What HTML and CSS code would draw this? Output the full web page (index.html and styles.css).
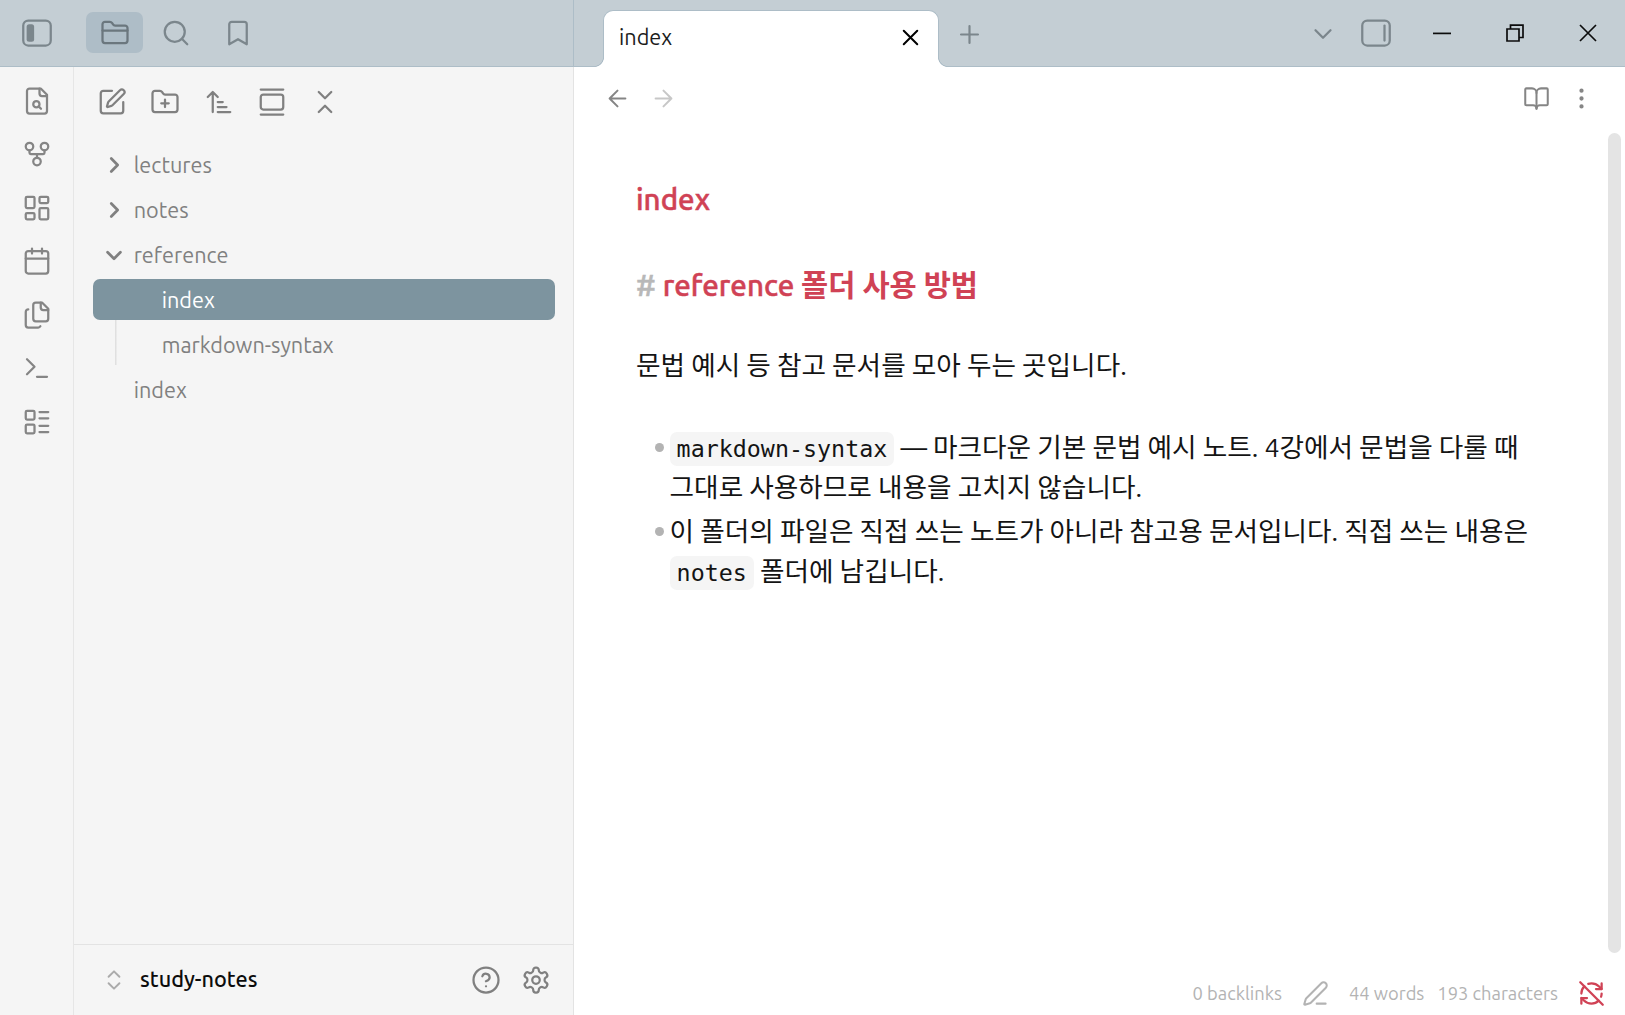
FILE: index.html
```html
<!DOCTYPE html>
<html lang="ko">
<head>
<meta charset="utf-8">
<title>index - study-notes</title>
<link rel="stylesheet" href="styles.css">
</head>
<body>
<header class="titlebar">
  <div class="titlebar-left">
    <div class="btn toggle-left"><svg class="icon" viewBox="0 0 24 24"><rect x="1" y="2" width="22" height="20" rx="4"/><rect class="solid" x="3.700" y="5" width="6" height="14" rx="2"/></svg></div>
    <div class="side-tab active"><svg class="icon" viewBox="0 0 24 24"><path d="M20 20a2 2 0 0 0 2-2V8a2 2 0 0 0-2-2h-7.900a2 2 0 0 1-1.690-.9L9.600 3.900A2 2 0 0 0 7.930 3H4a2 2 0 0 0-2 2v13a2 2 0 0 0 2 2Z"/><path d="M2 10h20"/></svg></div>
    <div class="side-tab"><svg class="icon" viewBox="0 0 24 24"><circle cx="11" cy="11" r="8"/><path d="m21 21-4.340-4.340"/></svg></div>
    <div class="side-tab"><svg class="icon" viewBox="0 0 24 24"><path d="m19 21-7-4-7 4V5a2 2 0 0 1 2-2h10a2 2 0 0 1 2 2z"/></svg></div>
  </div>
  <div class="titlebar-main">
    <div class="tab"><span class="tab-title">index</span><svg class="icon close" viewBox="0 0 24 24"><path d="M18 6 6 18M6 6l12 12"/></svg></div>
    <div class="btn new-tab"><svg class="icon" viewBox="0 0 24 24"><path d="M5 12h14M12 5v14"/></svg></div>
    <div class="btn tab-list"><svg class="icon" viewBox="0 0 24 24"><path d="m6 9 6 6 6-6"/></svg></div>
    <div class="btn toggle-right"><svg class="icon" viewBox="0 0 24 24"><rect x="1" y="2" width="22" height="20" rx="4"/><path d="M18.800 6v12"/></svg></div>
    <div class="window-controls">
      <svg viewBox="0 0 18 18"><path d="M0 9.400h18"/></svg>
      <svg viewBox="0 0 18 18"><path d="M1 5h12v12H1zM4.500 5V1.200H17v12.300h-4"/></svg>
      <svg viewBox="0 0 18 18"><path d="m1 1 16 16M17 1 1 17"/></svg>
    </div>
  </div>
</header>
<div class="workspace">
  <nav class="ribbon">
    <svg class="icon" viewBox="0 0 24 24"><path d="M14 2v4a2 2 0 0 0 2 2h4"/><path d="M15 2H6a2 2 0 0 0-2 2v16a2 2 0 0 0 2 2h12a2 2 0 0 0 2-2V7z"/><circle cx="11.500" cy="14.500" r="2.500"/><path d="m13.300 16.300 1.900 1.900"/></svg>
    <svg class="icon" viewBox="0 0 24 24"><circle cx="12" cy="18" r="3"/><circle cx="6" cy="6" r="3"/><circle cx="18" cy="6" r="3"/><path d="M18 9v2c0 .6-.4 1-1 1H7c-.6 0-1-.4-1-1V9M12 12v3"/></svg>
    <svg class="icon" viewBox="0 0 24 24"><rect x="3" y="3" width="7" height="9" rx="1"/><rect x="14" y="3" width="7" height="5" rx="1"/><rect x="14" y="12" width="7" height="9" rx="1"/><rect x="3" y="16" width="7" height="5" rx="1"/></svg>
    <svg class="icon" viewBox="0 0 24 24"><rect x="3" y="4" width="18" height="18" rx="2"/><path d="M8 2v4M16 2v4M3 10h18"/></svg>
    <svg class="icon" viewBox="0 0 24 24"><path d="M15 2v4a2 2 0 0 0 2 2h4"/><path d="M16 2h-5a2 2 0 0 0-2 2v11a2 2 0 0 0 2 2h8a2 2 0 0 0 2-2V7z"/><path d="M5 7.500c-1.100 0-2 .9-2 2V20a2 2 0 0 0 2 2h8a2 2 0 0 0 1.700-1"/></svg>
    <svg class="icon" viewBox="0 0 24 24"><path d="m4 17 6-6-6-6M12 19h8"/></svg>
    <svg class="icon" viewBox="0 0 24 24"><rect x="3" y="3" width="7" height="7" rx="1"/><rect x="3" y="14" width="7" height="7" rx="1"/><path d="M14 4h7M14 9h7M14 15h7M14 20h7"/></svg>
  </nav>
  <aside class="sidebar">
    <div class="nav-buttons">
      <svg class="icon" viewBox="0 0 24 24"><path d="M12 3H5a2 2 0 0 0-2 2v14a2 2 0 0 0 2 2h14a2 2 0 0 0 2-2v-7"/><path d="M18.375 2.625a1 1 0 0 1 3 3l-9.013 9.014a2 2 0 0 1-.853.505l-2.873.84a.5.5 0 0 1-.62-.62l.84-2.873a2 2 0 0 1 .506-.852z"/></svg>
      <svg class="icon" viewBox="0 0 24 24"><path d="M12 10v6M9 13h6"/><path d="M20 20a2 2 0 0 0 2-2V8a2 2 0 0 0-2-2h-7.900a2 2 0 0 1-1.690-.9L9.600 3.900A2 2 0 0 0 7.930 3H4a2 2 0 0 0-2 2v13a2 2 0 0 0 2 2Z"/></svg>
      <svg class="icon" viewBox="0 0 24 24"><path d="m3 8 4-4 4 4M7 4v16M11 12h4M11 16h7M11 20h10"/></svg>
      <svg class="icon" viewBox="0 0 24 24"><rect x="3" y="6" width="18" height="12" rx="2"/><path d="M3 2h18M3 22h18"/></svg>
      <svg class="icon" viewBox="0 0 24 24"><path d="m7 20 5-5 5 5M7 4l5 5 5-5"/></svg>
    </div>
    <div class="tree">
      <div class="row"><svg class="icon caret" viewBox="0 0 24 24"><path d="m9 5 7 7-7 7"/></svg><span>lectures</span></div>
      <div class="row"><svg class="icon caret" viewBox="0 0 24 24"><path d="m9 5 7 7-7 7"/></svg><span>notes</span></div>
      <div class="row"><svg class="icon caret" viewBox="0 0 24 24"><path d="m5 9 7 7 7-7"/></svg><span>reference</span></div>
      <div class="children">
        <div class="row child selected"><span>index</span></div>
        <div class="row child"><span>markdown-syntax</span></div>
      </div>
      <div class="row leaf"><span>index</span></div>
    </div>
    <div class="vault">
      <svg class="icon updown" viewBox="0 0 24 24"><path d="m7 15 5 5 5-5M7 9l5-5 5 5"/></svg>
      <span class="vault-name">study-notes</span>
      <svg class="icon" viewBox="0 0 24 24"><circle cx="12" cy="12" r="10"/><path d="M9.090 9a3 3 0 0 1 5.830 1c0 2-3 3-3 3M12 17h.01"/></svg>
      <svg class="icon" viewBox="0 0 24 24"><path d="M12.220 2h-.44a2 2 0 0 0-2 2v.18a2 2 0 0 1-1 1.730l-.43.25a2 2 0 0 1-2 0l-.15-.08a2 2 0 0 0-2.730.73l-.22.38a2 2 0 0 0 .73 2.730l.15.1a2 2 0 0 1 1 1.720v.51a2 2 0 0 1-1 1.740l-.15.09a2 2 0 0 0-.73 2.730l.22.38a2 2 0 0 0 2.730.73l.15-.08a2 2 0 0 1 2 0l.43.25a2 2 0 0 1 1 1.730V20a2 2 0 0 0 2 2h.44a2 2 0 0 0 2-2v-.18a2 2 0 0 1 1-1.730l.43-.25a2 2 0 0 1 2 0l.15.08a2 2 0 0 0 2.730-.73l.22-.39a2 2 0 0 0-.73-2.730l-.15-.08a2 2 0 0 1-1-1.740v-.5a2 2 0 0 1 1-1.740l.15-.09a2 2 0 0 0 .73-2.730l-.22-.38a2 2 0 0 0-2.730-.73l-.15.08a2 2 0 0 1-2 0l-.43-.25a2 2 0 0 1-1-1.730V4a2 2 0 0 0-2-2z"/><circle cx="12" cy="12" r="3"/></svg>
    </div>
  </aside>
  <main class="leaf-view">
    <div class="view-header">
      <svg class="icon" viewBox="0 0 24 24"><path d="m12 19-7-7 7-7M19 12H5"/></svg>
      <svg class="icon disabled" viewBox="0 0 24 24"><path d="M5 12h14M12 5l7 7-7 7"/></svg>
      <svg class="icon book" viewBox="0 0 24 24"><path d="M12 7v14"/><path d="M3 18a1 1 0 0 1-1-1V4a1 1 0 0 1 1-1h5a4 4 0 0 1 4 4 4 4 0 0 1 4-4h5a1 1 0 0 1 1 1v13a1 1 0 0 1-1 1h-6a3 3 0 0 0-3 3 3 3 0 0 0-3-3z"/></svg>
      <svg class="icon" viewBox="0 0 24 24"><circle cx="12" cy="12" r="1"/><circle cx="12" cy="5" r="1"/><circle cx="12" cy="19" r="1"/></svg>
    </div>
    <div class="scroller">
      <article class="note">
        <h1 class="inline-title">index</h1>
        <h2 class="heading"><span class="mark">#</span> reference <span class="hangul">폴더 사용 방법</span></h2>
        <p class="para">문법 예시 등 참고 문서를 모아 두는 곳입니다.</p>
        <ul class="list">
          <li><code>markdown-syntax</code> <span class="dash">—</span> 마크다운 기본 문법 예시 노트. 4강에서 문법을 다룰 때<br>그대로 사용하므로 내용을 고치지 않습니다.</li>
          <li>이 폴더의 파일은 직접 쓰는 노트가 아니라 참고용 문서입니다. 직접 쓰는 내용은<br><code>notes</code> 폴더에 남깁니다.</li>
        </ul>
      </article>
      <div class="scrollbar"></div>
    </div>
    <footer class="status">
      <span class="backlinks">0 backlinks</span>
      <svg class="icon pen" viewBox="0 0 24 24"><path d="M13 21h8"/><path d="M21.174 6.812a1 1 0 0 0-3.986-3.987L3.842 16.174a2 2 0 0 0-.5.830l-1.321 4.352a.5.5 0 0 0 .623.622l4.353-1.320a2 2 0 0 0 .830-.497z"/></svg>
      <span class="words">44 words</span>
      <span class="chars">193 characters</span>
      <svg class="icon sync" viewBox="0 0 24 24"><path d="M21 8 18.740 5.740A9.750 9.750 0 0 0 12 3C11 3 10.030 3.160 9.130 3.470"/><path d="M8 16H3v5"/><path d="M3 12C3 9.510 4 7.260 5.640 5.640"/><path d="m3 16 2.260 2.260A9.750 9.750 0 0 0 12 21c2.490 0 4.740-1 6.360-2.640"/><path d="M21 12c0 1-.16 1.970-.47 2.870"/><path d="M21 3v5h-5"/><path d="M22 22 2 2"/></svg>
    </footer>
  </main>
</div>
</body>
</html>
```
FILE: styles.css
```css
* { box-sizing: border-box; }
body {
  margin: 0;
  width: 1625px;
  height: 1015px;
  overflow: hidden;
  display: flex;
  flex-direction: column;
  background: #fff;
  color: #121212;
  font: 21.667px/28px "Ubuntu", "Noto Sans", "Noto Sans CJK KR", sans-serif;
}
.icon {
  display: block;
  flex: none;
  width: 30px;
  height: 30px;
  fill: none;
  stroke: currentColor;
  stroke-width: 1.800;
  stroke-linecap: round;
  stroke-linejoin: round;
}
.solid { fill: currentColor; stroke: none; }

.titlebar { display: flex; height: 67px; flex: none; color: #7b868c; }
.titlebar-left {
  display: flex;
  width: 574px;
  padding: 12px 0 0 22px;
  background: #c4ced4;
  border-right: 1px solid #adbdc7;
  border-bottom: 1px solid #adbdc7;
}
.btn { display: flex; align-items: center; height: 42px; }
.toggle-left { margin-right: 34.300px; }
.side-tab {
  display: flex;
  align-items: center;
  justify-content: center;
  width: 57px;
  height: 41px;
  margin-right: 4.700px;
  border-radius: 7px;
}
.side-tab.active { background: #aebdc7; color: #6b777e; }
.titlebar-main {
  display: flex;
  flex: 1;
  padding: 11px 0 0 29px;
  background: #c4ced4;
  border-bottom: 1px solid #adbdc7;
}
.tab {
  position: relative;
  display: flex;
  align-items: center;
  justify-content: space-between;
  width: 336px;
  height: 57px;
  margin-top: -1px;
  padding: 0 14px 4px 15px;
  background: #fff;
  border: 1px solid #adbdc7;
  border-bottom: 0;
  border-radius: 10px 10px 0 0;
  color: #1c1c1c;
}
.tab::before, .tab::after {
  content: "";
  position: absolute;
  bottom: 0;
  width: 10px;
  height: 10px;
}
.tab::before {
  left: -10px;
  background: radial-gradient(circle at 0 0, #c4ced4 8.700px, #adbdc7 9.200px, #adbdc7 9.700px, #fff 10.300px);
}
.tab::after {
  right: -10px;
  background: radial-gradient(circle at 100% 0, #c4ced4 8.700px, #adbdc7 9.200px, #adbdc7 9.700px, #fff 10.300px);
}
.close { width: 27px; height: 27px; color: #000; }
.new-tab { margin-left: 16px; height: 46px; }
.new-tab .icon { width: 29px; height: 29px; }
.tab-list { margin-left: auto; height: 45px; }
.toggle-right { margin-left: 23px; height: 43px; }
.window-controls {
  display: flex;
  gap: 55px;
  margin: 13px 28px 0 42px;
}
.window-controls svg {
  width: 18px;
  height: 18px;
  fill: none;
  stroke: #0c0c0c;
  stroke-width: 1.700;
}

.workspace { display: flex; flex: 1; min-height: 0; }
.ribbon {
  display: flex;
  flex-direction: column;
  gap: 23.500px;
  width: 74px;
  padding: 18.600px 0 0 22px;
  background: #f5f5f5;
  border-right: 1.500px solid #e6e6e6;
  color: #858585;
}
.sidebar {
  display: flex;
  flex-direction: column;
  width: 500px;
  background: #f5f5f5;
  border-right: 1.500px solid #e3e3e3;
  color: #808080;
}
.nav-buttons { display: flex; gap: 23.400px; padding: 20.400px 0 0 22.900px; }
.tree {
  display: flex;
  flex-direction: column;
  flex: 1;
  gap: 4.500px;
  padding: 26.900px 18px 0 18.700px;
}
.row {
  display: flex;
  align-items: center;
  height: 40.500px;
  padding-left: 10.500px;
  border-radius: 7px;
}
.caret { width: 22px; height: 22px; margin-right: 8.500px; stroke-width: 3; }
.children {
  display: flex;
  flex-direction: column;
  gap: 4.500px;
  background: linear-gradient(#e0e0e0, #e0e0e0) 22px 0 / 1.500px 100% no-repeat;
}
.row.child { padding-left: 69px; }
.row.leaf { padding-left: 41px; }
.selected { background: #7d949f; color: #fff; }
.vault {
  display: flex;
  align-items: center;
  height: 71px;
  padding: 0 22px 0 27px;
  border-top: 1.500px solid #e3e3e3;
}
.updown { width: 26px; height: 26px; color: #ababab; }
.vault-name {
  flex: 1;
  padding: 0 0 1.500px 13px;
  color: #0c0c0c;
  font-weight: 500;
}
.vault .icon + .icon { margin-left: 20px; }

.leaf-view { display: flex; flex-direction: column; flex: 1; color: #858585; }
.view-header {
  display: flex;
  align-items: center;
  height: 66px;
  padding: 0 30.500px 3px 30px;
}
.view-header .icon { width: 27px; height: 27px; margin-right: 19px; }
.view-header .icon.book { margin-left: auto; margin-right: 17.500px; }
.view-header .icon:last-child { margin-right: 0; }
.disabled { opacity: .45; }
.scroller { display: flex; justify-content: space-between; height: 820px; }
.scrollbar { width: 13px; margin-right: 4px; border-radius: 7px; background: #e4e4e4; }
.note {
  padding: 47px 0 0 62px;
  color: #141414;
  font: 26.667px/40px "Ubuntu", "Noto Sans CJK KR", sans-serif;
  white-space: nowrap;
}
.inline-title, .heading {
  margin: 0;
  color: #d04255;
  font: 500 29.500px/40px "Ubuntu", "Noto Sans", "Noto Sans CJK KR", sans-serif;
  -webkit-text-stroke: .5px currentColor;
}
.heading { margin-top: 46px; }
.hangul { font-weight: 700; -webkit-text-stroke: 0; }
.mark { color: #b8b8b8; }
.para { margin: 39px 0 0; }
.list { margin: 42px 0 0; padding: 0 0 0 33.600px; list-style: none; }
.list li { position: relative; margin-bottom: 4px; }
.list li::before {
  content: "";
  position: absolute;
  left: -14.500px;
  top: 15.500px;
  width: 9px;
  height: 9px;
  border-radius: 50%;
  background: #b3b3b3;
}
code {
  padding: 3px 7px;
  border-radius: 7px;
  background: #f5f5f5;
  font: 23.333px/27px "DejaVu Sans Mono", monospace;
}
.status {
  display: flex;
  align-items: center;
  justify-content: flex-end;
  height: 42px;
  margin-top: auto;
  margin-bottom: 1px;
  padding-right: 20px;
  color: #b3b3b3;
  font-size: 18.333px;
}
.status .icon { width: 27px; height: 27px; }
.status .pen { margin: 0 20px; }
.words { margin-right: 13px; }
.status .sync { margin-left: 20px; color: #d04255; stroke-width: 2; }
```
